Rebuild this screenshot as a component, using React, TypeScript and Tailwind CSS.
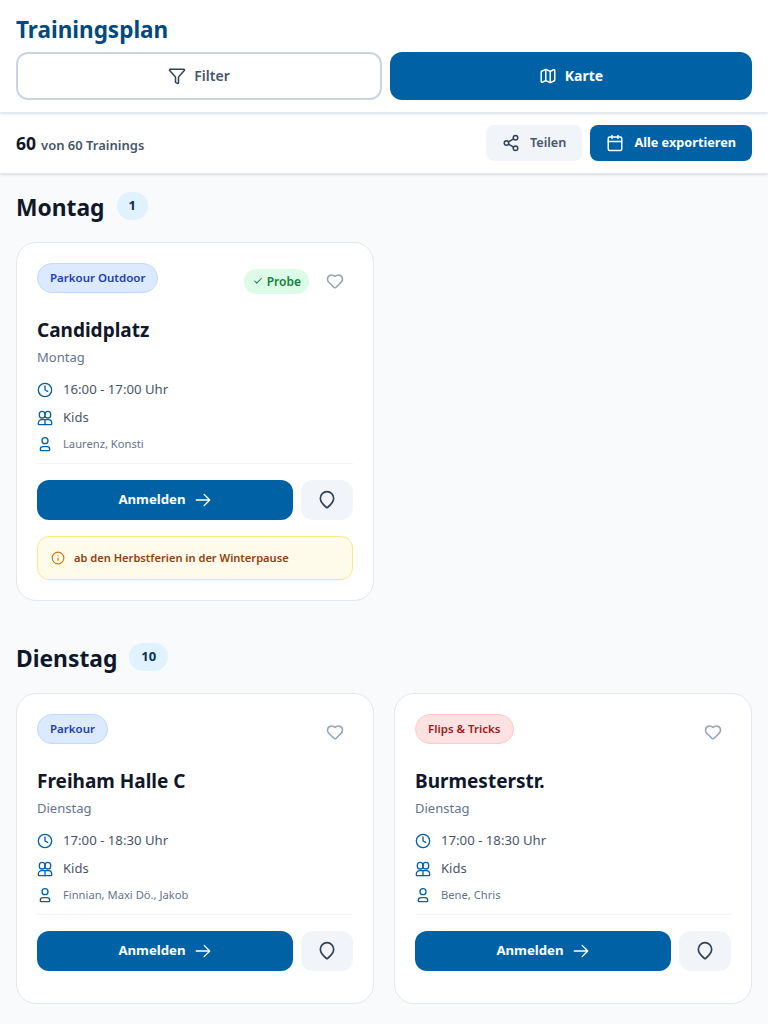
import { Calendar, Check, Clock, Funnel, Heart, Info, Map, Share2 } from "lucide-react";

type Training = {
  tag: string;
  tagClass: string;
  name: string;
  day: string;
  time: string;
  trainers: string;
  trial?: boolean;
  note?: string;
};

const BLUE_TAG = "bg-[#dbeafe] border-[#bfdbfe] text-[#1e40af]";
const RED_TAG = "bg-[#fee2e2] border-[#fecaca] text-[#991b1b]";

function UsersIcon() {
  return (
    <svg width="16" height="16" viewBox="0 0 24 24" fill="none" stroke="currentColor" strokeWidth="2" strokeLinecap="round" strokeLinejoin="round" className="shrink-0">
      <rect x="3.5" y="2" width="8.5" height="10" rx="4.25" />
      <rect x="12" y="2" width="8.5" height="10" rx="4.25" />
      <path d="M3 22a1 1 0 0 1-1-1v-1.5a5 5 0 0 1 5-5h10a5 5 0 0 1 5 5V21a1 1 0 0 1-1 1z" />
      <path d="M12 14.5V22" />
    </svg>
  );
}

function TrainerIcon() {
  return (
    <svg width="16" height="16" viewBox="0 0 24 24" fill="none" stroke="currentColor" strokeWidth="2" strokeLinecap="round" strokeLinejoin="round" className="shrink-0">
      <circle cx="12" cy="7" r="4.5" />
      <path d="M6 22a1 1 0 0 1-1-1v-1a4 4 0 0 1 4-4h6a4 4 0 0 1 4 4v1a1 1 0 0 1-1 1z" />
    </svg>
  );
}

function PinIcon() {
  return (
    <svg width="20" height="20" viewBox="0 0 24 24" fill="none" stroke="currentColor" strokeWidth="2" strokeLinecap="round" strokeLinejoin="round">
      <path d="M20 10c0 5-5.5 9.5-7.4 11a1 1 0 0 1-1.2 0C9.5 19.5 4 15 4 10a8 8 0 0 1 16 0z" />
    </svg>
  );
}

function ArrowIcon() {
  return (
    <svg width="18" height="18" viewBox="0 0 24 24" fill="none" stroke="currentColor" strokeWidth="1.8" strokeLinecap="round" strokeLinejoin="round">
      <path d="M13.5 4.5 21 12l-7.5 7.5M21 12H3" />
    </svg>
  );
}

function TrainingCard({ item }: { item: Training }) {
  return (
    <div className={`rounded-[20px] border border-[#e2e8f0] bg-white px-5 pt-5 ${item.note ? "pb-5" : "pb-8"}`}>
      <div className="flex items-start justify-between">
        <span className={`rounded-full border px-3 py-[6px] text-[11.5px] leading-4 font-semibold ${item.tagClass}`}>
          {item.tag}
        </span>
        <div className="flex items-center gap-2">
          {item.trial && (
            <span className="flex items-center gap-1 rounded-full bg-[#dcfce7] py-1 pr-2 pl-[9px] text-xs leading-[17px] font-semibold text-[#15803d]">
              <Check size={10} strokeWidth={2.5} />
              Probe
            </span>
          )}
          <button className="flex h-9 w-9 items-center justify-center text-[#94a3b8]">
            <Heart size={18} />
          </button>
        </div>
      </div>

      <h3 className="mt-[17px] text-[19px] leading-7 font-bold text-[#0f172a]">{item.name}</h3>
      <p className="mt-[3px] text-[13px] leading-5 text-[#64748b]">{item.day}</p>

      <div className="mt-[13px] text-[#475569]">
        <div className="flex h-5 items-center gap-[10px] text-[13.2px]">
          <span className="text-[#0062a4]"><Clock size={16} /></span>
          {item.time}
        </div>
        <div className="mt-2 flex h-5 items-center gap-[10px] text-[13px]">
          <span className="text-[#0062a4]"><UsersIcon /></span>
          Kids
        </div>
        <div className="mt-[6px] flex h-5 items-center gap-[10px] text-[11.2px] text-[#64748b]">
          <span className="text-[#0062a4]"><TrainerIcon /></span>
          {item.trainers}
        </div>
      </div>

      <div className="mt-[9px] flex gap-2 border-t border-[#f1f5f9] pt-4">
        <button className="flex h-10 flex-1 items-center justify-center gap-2 rounded-xl bg-[#0062a4] text-[13.2px] font-bold text-white">
          Anmelden
          <ArrowIcon />
        </button>
        <button className="flex h-10 w-[52px] items-center justify-center rounded-xl bg-[#f1f5f9] text-[#334155]">
          <PinIcon />
        </button>
      </div>

      {item.note && (
        <div className="mt-4 flex items-center gap-[9px] rounded-xl border border-[#fde68a] bg-[#fffbeb] px-[13px] py-[13px] text-[11.1px] leading-4 font-semibold text-[#92400e]">
          <Info size={14} className="text-[#d97706]" />
          {item.note}
        </div>
      )}
    </div>
  );
}

function DayHeader({ day, count }: { day: string; count: number }) {
  return (
    <div className="flex items-center gap-3">
      <h2 className="pt-[3px] text-[22.8px] leading-[29px] font-bold text-[#0f172a]">{day}</h2>
      <span className="flex h-7 items-center rounded-full bg-[#e0f2fe] px-3 text-[13px] font-bold text-[#0f2f50]">{count}</span>
    </div>
  );
}

const MONDAY: Training[] = [
  {
    tag: "Parkour Outdoor",
    tagClass: BLUE_TAG,
    name: "Candidplatz",
    day: "Montag",
    time: "16:00 - 17:00 Uhr",
    trainers: "Laurenz, Konsti",
    trial: true,
    note: "ab den Herbstferien in der Winterpause",
  },
];

const TUESDAY: Training[] = [
  {
    tag: "Parkour",
    tagClass: BLUE_TAG,
    name: "Freiham Halle C",
    day: "Dienstag",
    time: "17:00 - 18:30 Uhr",
    trainers: "Finnian, Maxi Dö., Jakob",
  },
  {
    tag: "Flips & Tricks",
    tagClass: RED_TAG,
    name: "Burmesterstr.",
    day: "Dienstag",
    time: "17:00 - 18:30 Uhr",
    trainers: "Bene, Chris",
  },
];

export default function App() {
  return (
    <div className="h-[1024px] overflow-hidden bg-[#f8fafc] font-['Noto_Sans',sans-serif]">
      <header className="relative border-b border-[#e2e8f0] bg-white px-4 pt-4 pb-3 shadow-sm">
        <h1 className="text-[22.5px] leading-7 font-bold text-[#004a80]">Trainingsplan</h1>
        <div className="mt-2 flex gap-2">
          <button className="flex h-12 flex-1 items-center justify-center gap-2 rounded-xl border-2 border-[#cbd5e1] text-sm font-semibold text-[#475569]">
            <Funnel size={18} className="text-[#334155]" />
            Filter
          </button>
          <button className="flex h-12 flex-1 items-center justify-center gap-2 rounded-xl bg-[#0062a4] text-sm font-bold text-white">
            <Map size={18} />
            Karte
          </button>
        </div>
      </header>

      <div className="flex h-[61px] items-center justify-between border-b border-[#e2e8f0] bg-white px-4 shadow-sm">
        <p className="flex items-baseline gap-[5px] text-[13px] font-semibold text-[#475569]">
          <span className="text-[17.5px] font-bold text-[#0f172a]">60</span>
          von 60 Trainings
        </p>
        <div className="flex gap-2">
          <button className="flex h-9 items-center gap-[10px] rounded-lg bg-[#f1f5f9] px-4 text-[12.7px] font-semibold text-[#475569]">
            <Share2 size={18} className="text-[#334155]" />
            Teilen
          </button>
          <button className="flex h-9 items-center gap-[10px] rounded-lg bg-[#0062a4] px-4 text-[12.7px] font-bold text-white">
            <Calendar size={18} />
            Alle exportieren
          </button>
        </div>
      </div>

      <main className="px-4 pt-4">
        <DayHeader day="Montag" count={1} />
        <div className="mt-5 grid grid-cols-2 gap-5">
          {MONDAY.map((item) => (
            <TrainingCard key={item.name} item={item} />
          ))}
        </div>

        <div className="mt-10">
          <DayHeader day="Dienstag" count={10} />
        </div>
        <div className="mt-5 grid grid-cols-2 gap-5">
          {TUESDAY.map((item) => (
            <TrainingCard key={item.name} item={item} />
          ))}
        </div>
      </main>
    </div>
  );
}
